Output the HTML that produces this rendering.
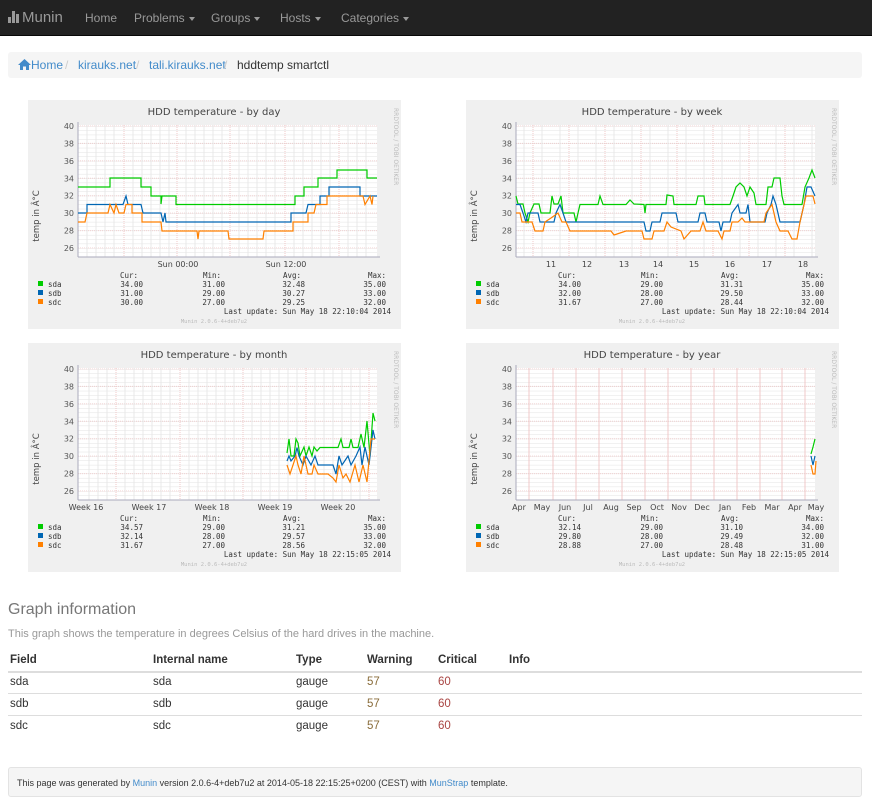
<!DOCTYPE html>
<html><head><meta charset="utf-8"><style>
*{margin:0;padding:0;box-sizing:border-box}
body{width:872px;height:809px;background:#fff;font-family:"Liberation Sans",Arial,sans-serif;font-size:12px;color:#333;position:relative;overflow:hidden}
.nav{position:absolute;left:0;top:0;width:872px;height:36px;background:#222;border-bottom:1px solid #080808}
.nav span{position:absolute;top:11px;color:#999;font-size:12px}
.brand{position:absolute;left:8px;top:9px;color:#999;font-size:15px}
.caret{display:inline-block;width:0;height:0;border-left:3px solid transparent;border-right:3px solid transparent;border-top:4px solid #999;vertical-align:middle;margin-left:4px}
.bc{position:absolute;left:8px;top:52px;width:854px;height:26px;background:#f5f5f5;border-radius:3px}
.bc span{position:absolute;top:6px;font-size:12px}
a,.lk{color:#428bca}
.sep{color:#ccc}
.g{position:absolute;width:373px;height:229px}
h3{position:absolute;left:8px;top:601px;font-size:16px;font-weight:normal;color:#777}
.desc{position:absolute;left:8px;top:628px;color:#999;font-size:11px}
.t{position:absolute;font-size:11.5px;color:#333}
.th{font-weight:bold}
.line{position:absolute;left:8px;width:854px;height:1px;background:#ddd}
.foot{position:absolute;left:8px;top:767px;width:854px;height:30px;background:#f5f5f5;border:1px solid #e3e3e3;border-radius:3px;font-size:9px;padding:10px 0 0 8px;color:#333}
</style></head><body>
<svg width="0" height="0" style="position:absolute"><defs>
<pattern id="hm" x="0" y="26" width="10" height="4.357" patternUnits="userSpaceOnUse"><line x1="0" y1="0" x2="10" y2="0" stroke="#e2e2e2" stroke-width="1"/></pattern>
</defs></svg>

<div class="nav">
<div class="brand"><svg width="14" height="12" style="vertical-align:-1px"><rect x="0" y="6" width="3" height="6" fill="#999"/><rect x="4" y="0" width="3" height="12" fill="#999"/><rect x="8" y="3" width="3" height="9" fill="#999"/></svg>Munin</div>
<span style="left:85px">Home</span>
<span style="left:134px">Problems<i class="caret"></i></span>
<span style="left:211px">Groups<i class="caret"></i></span>
<span style="left:280px">Hosts<i class="caret"></i></span>
<span style="left:341px">Categories<i class="caret"></i></span>
</div>

<div class="bc">
<span style="left:10px" class="lk"><svg width="13" height="11" style="vertical-align:-1px"><path d="M6.5 0 L13 6 L11 6 L11 11 L8 11 L8 7.5 L5 7.5 L5 11 L2 11 L2 6 L0 6 Z" fill="#428bca"/></svg>Home</span>
<span style="left:57px" class="sep">/</span>
<span style="left:70px" class="lk">kirauks.net</span>
<span style="left:128px" class="sep">/</span>
<span style="left:141px" class="lk">tali.kirauks.net</span>
<span style="left:216px" class="sep">/</span>
<span style="left:229px">hddtemp smartctl</span>
</div>

<!-- GRAPH TEMPLATE pieces repeated -->
<svg class="g" style="left:28px;top:100px" viewBox="0 0 373 229" font-family="DejaVu Sans,sans-serif">
<rect width="373" height="229" fill="#f0f0f0"/>
<rect x="50" y="25" width="299" height="132" fill="#fff"/>
<rect x="50" y="25" width="299" height="132" fill="url(#hm)"/>
<g stroke="#f0d0d0" stroke-width="1" stroke-dasharray="1,1"><line x1="50" y1="26" x2="349" y2="26"/><line x1="50" y1="43.4" x2="349" y2="43.4"/><line x1="50" y1="60.9" x2="349" y2="60.9"/><line x1="50" y1="78.3" x2="349" y2="78.3"/><line x1="50" y1="95.7" x2="349" y2="95.7"/><line x1="50" y1="113.1" x2="349" y2="113.1"/><line x1="50" y1="130.6" x2="349" y2="130.6"/><line x1="50" y1="148" x2="349" y2="148"/></g>
<g stroke="#e8e8e8"><line x1="59" y1="25" x2="59" y2="157"/><line x1="68" y1="25" x2="68" y2="157"/><line x1="77" y1="25" x2="77" y2="157"/><line x1="86" y1="25" x2="86" y2="157"/><line x1="105" y1="25" x2="105" y2="157"/><line x1="114" y1="25" x2="114" y2="157"/><line x1="123" y1="25" x2="123" y2="157"/><line x1="132" y1="25" x2="132" y2="157"/><line x1="141" y1="25" x2="141" y2="157"/><line x1="158" y1="25" x2="158" y2="157"/><line x1="167" y1="25" x2="167" y2="157"/><line x1="176" y1="25" x2="176" y2="157"/><line x1="185" y1="25" x2="185" y2="157"/><line x1="194" y1="25" x2="194" y2="157"/><line x1="211" y1="25" x2="211" y2="157"/><line x1="220" y1="25" x2="220" y2="157"/><line x1="229" y1="25" x2="229" y2="157"/><line x1="238" y1="25" x2="238" y2="157"/><line x1="247" y1="25" x2="247" y2="157"/><line x1="266" y1="25" x2="266" y2="157"/><line x1="275" y1="25" x2="275" y2="157"/><line x1="284" y1="25" x2="284" y2="157"/><line x1="293" y1="25" x2="293" y2="157"/><line x1="302" y1="25" x2="302" y2="157"/><line x1="320" y1="25" x2="320" y2="157"/><line x1="329" y1="25" x2="329" y2="157"/><line x1="338" y1="25" x2="338" y2="157"/></g>
<g stroke="#f0c8c8" stroke-dasharray="1,1"><line x1="96" y1="25" x2="96" y2="157"/><line x1="149" y1="25" x2="149" y2="157"/><line x1="202" y1="25" x2="202" y2="157"/><line x1="257" y1="25" x2="257" y2="157"/><line x1="311" y1="25" x2="311" y2="157"/></g>
<g stroke="#aab" stroke-width="1"><line x1="50" y1="157" x2="352" y2="157"/><line x1="50" y1="22" x2="50" y2="157"/></g>
<g font-size="8" fill="#555" text-anchor="end"><text x="46" y="29">40</text><text x="46" y="46.4">38</text><text x="46" y="63.9">36</text><text x="46" y="81.3">34</text><text x="46" y="98.7">32</text><text x="46" y="116.1">30</text><text x="46" y="133.6">28</text><text x="46" y="151">26</text></g>
<text x="186" y="15" font-size="10" fill="#444" text-anchor="middle">HDD temperature - by day</text>
<text transform="translate(11,116) rotate(-90)" font-size="8.5" fill="#444" text-anchor="middle">temp in Â°C</text>
<text transform="translate(366,8) rotate(90)" font-size="6" fill="#bbb">RRDTOOL / TOBI OETIKER</text>
<g font-size="8" fill="#444" text-anchor="middle"><text x="150" y="167">Sun 00:00</text><text x="258" y="167">Sun 12:00</text></g>
<g fill="none" stroke-width="1.2">
<polyline stroke="#00cc00" points="50,87 82,87 82,78 113,78 113,87 123,87 123,96 133,96 133,104 134,96 148,96 148,104.5 267,104.5 267,96 276,96 276,87 290,87 290,78 309,78 309,70 339,70 339,78 349,78"/>
<polyline stroke="#0066b3" points="50,113 59,113 59,104.5 95,104.5 98,96 100,104.5 113,104.5 115,113 133,113 135,122 137,113 138,122 263,122 263,113 278,113 280,104.5 292,104.5 292,96 301,96 301,87 332,87 332,96 349,96"/>
<polyline stroke="#ff8000" points="50,122 57,122 59,113 80,113 82,104.5 86,113 88,104.5 91,113 96,113 98,104.5 104,104.5 104,113 114,113 114,122 133,122 134,131 169,131 170,139 171,131 200,131 201,139 235,139 236,131 265,131 265,122 280,122 280,113 286,113 288,104.5 299,104.5 299,96 335,96 337,104.5 342,96 344,104.5 345,96"/>
</g>
<g font-family="DejaVu Sans Mono,monospace" font-size="7.5" fill="#333">
<rect x="10" y="181" width="5" height="5" fill="#00cc00"/><rect x="10" y="190" width="5" height="5" fill="#0066b3"/><rect x="10" y="199" width="5" height="5" fill="#ff8000"/>
<text x="20" y="187">sda</text><text x="20" y="196">sdb</text><text x="20" y="205">sdc</text>
<text x="92" y="178">Cur:</text><text x="175" y="178">Min:</text><text x="255" y="178">Avg:</text><text x="358" y="178" text-anchor="end">Max:</text>
<g text-anchor="end"><text x="115" y="187">34.00</text><text x="197" y="187">31.00</text><text x="277" y="187">32.48</text><text x="358" y="187">35.00</text>
<text x="115" y="196">31.00</text><text x="197" y="196">29.00</text><text x="277" y="196">30.27</text><text x="358" y="196">33.00</text>
<text x="115" y="205">30.00</text><text x="197" y="205">27.00</text><text x="277" y="205">29.25</text><text x="358" y="205">32.00</text>
<text x="363" y="214">Last update:  Sun May 18 22:10:04 2014</text></g>
<text x="186" y="223" font-size="5.5" fill="#bbb" text-anchor="middle">Munin 2.0.6-4+deb7u2</text></g>
</svg>

<svg class="g" style="left:466px;top:100px" viewBox="0 0 373 229" font-family="DejaVu Sans,sans-serif">
<rect width="373" height="229" fill="#f0f0f0"/>
<rect x="50" y="25" width="299" height="132" fill="#fff"/>
<rect x="50" y="25" width="299" height="132" fill="url(#hm)"/>
<g stroke="#f0d0d0" stroke-dasharray="1,1"><line x1="50" y1="26" x2="349" y2="26"/><line x1="50" y1="43.4" x2="349" y2="43.4"/><line x1="50" y1="60.9" x2="349" y2="60.9"/><line x1="50" y1="78.3" x2="349" y2="78.3"/><line x1="50" y1="95.7" x2="349" y2="95.7"/><line x1="50" y1="113.1" x2="349" y2="113.1"/><line x1="50" y1="130.6" x2="349" y2="130.6"/><line x1="50" y1="148" x2="349" y2="148"/></g>
<g stroke="#e8e8e8"><line x1="58" y1="25" x2="58" y2="157"/><line x1="76" y1="25" x2="76" y2="157"/><line x1="94" y1="25" x2="94" y2="157"/><line x1="112" y1="25" x2="112" y2="157"/><line x1="130" y1="25" x2="130" y2="157"/><line x1="148" y1="25" x2="148" y2="157"/><line x1="166" y1="25" x2="166" y2="157"/><line x1="184" y1="25" x2="184" y2="157"/><line x1="202" y1="25" x2="202" y2="157"/><line x1="220" y1="25" x2="220" y2="157"/><line x1="238" y1="25" x2="238" y2="157"/><line x1="256" y1="25" x2="256" y2="157"/><line x1="274" y1="25" x2="274" y2="157"/><line x1="292" y1="25" x2="292" y2="157"/><line x1="310" y1="25" x2="310" y2="157"/><line x1="328" y1="25" x2="328" y2="157"/><line x1="346" y1="25" x2="346" y2="157"/></g>
<g stroke="#f0c8c8" stroke-dasharray="1,1"><line x1="67" y1="25" x2="67" y2="157"/><line x1="103" y1="25" x2="103" y2="157"/><line x1="139" y1="25" x2="139" y2="157"/><line x1="175" y1="25" x2="175" y2="157"/><line x1="211" y1="25" x2="211" y2="157"/><line x1="247" y1="25" x2="247" y2="157"/><line x1="283" y1="25" x2="283" y2="157"/><line x1="319" y1="25" x2="319" y2="157"/></g>
<g stroke="#aab"><line x1="50" y1="157" x2="352" y2="157"/><line x1="50" y1="22" x2="50" y2="157"/></g>
<g font-size="8" fill="#555" text-anchor="end"><text x="46" y="29">40</text><text x="46" y="46.4">38</text><text x="46" y="63.9">36</text><text x="46" y="81.3">34</text><text x="46" y="98.7">32</text><text x="46" y="116.1">30</text><text x="46" y="133.6">28</text><text x="46" y="151">26</text></g>
<text x="186" y="15" font-size="10" fill="#444" text-anchor="middle">HDD temperature - by week</text>
<text transform="translate(11,116) rotate(-90)" font-size="8.5" fill="#444" text-anchor="middle">temp in Â°C</text>
<text transform="translate(366,8) rotate(90)" font-size="6" fill="#bbb">RRDTOOL / TOBI OETIKER</text>
<g font-size="8" fill="#444" text-anchor="middle"><text x="85" y="167">11</text><text x="121" y="167">12</text><text x="158" y="167">13</text><text x="192" y="167">14</text><text x="228" y="167">15</text><text x="264" y="167">16</text><text x="301" y="167">17</text><text x="337" y="167">18</text></g>
<g fill="none" stroke-width="1.2">
<polyline stroke="#00cc00" points="50,96 52,104 57,104 59,113 62,122 64,113 68,104 73,104 75,113 84,113 86,96 88,104 92,104 95,96 97,113 108,113 110,122 112,113 114,104.5 132,104.5 134,96 137,104.5 160,104.5 164,100 168,104 178,104.5 179,113 180,104.5 200,104.5 201,95 207,96 208,104.5 230,104.5 232,96 238,96 239,104.5 264,104.5 267,96 270,87 274,83 278,87 281,96 284,87 288,93 290,104.5 300,104.5 302,87 306,87 308,78 314,78 316,96 318,104.5 336,104.5 339,87 343,78 346,70 349,78"/>
<polyline stroke="#0066b3" points="50,104.5 54,104.5 57,113 60,122 62,113 72,113 74,122 88,122 90,113 94,104.5 97,113 100,122 178,122 180,131 184,131 186,122 194,122 196,113 210,113 212,122 232,122 234,113 239,113 241,122 253,122 255,131 257,122 264,122 266,113 272,104.5 274,113 280,113 282,104.5 284,122 299,122 301,113 305,104.5 307,96 310,104.5 314,122 334,122 338,104.5 341,87 345,87 349,96"/>
<polyline stroke="#ff8000" points="50,113 54,113 56,122 66,122 69,131 77,131 79,122 85,118 92,113 96,122 100,122 104,131 145,131 148,135 160,131 176,131 178,139 186,139 188,131 198,131 201,122 205,127 215,131 218,139 225,131 234,131 237,122 240,131 252,131 256,139 258,131 264,131 266,122 272,122 276,118 279,122 298,122 300,113 306,104.5 310,122 314,131 322,131 326,139 331,139 334,122 340,96 347,96 349,104"/>
</g>
<g font-family="DejaVu Sans Mono,monospace" font-size="7.5" fill="#333">
<rect x="10" y="181" width="5" height="5" fill="#00cc00"/><rect x="10" y="190" width="5" height="5" fill="#0066b3"/><rect x="10" y="199" width="5" height="5" fill="#ff8000"/>
<text x="20" y="187">sda</text><text x="20" y="196">sdb</text><text x="20" y="205">sdc</text>
<text x="92" y="178">Cur:</text><text x="175" y="178">Min:</text><text x="255" y="178">Avg:</text><text x="358" y="178" text-anchor="end">Max:</text>
<g text-anchor="end"><text x="115" y="187">34.00</text><text x="197" y="187">29.00</text><text x="277" y="187">31.31</text><text x="358" y="187">35.00</text>
<text x="115" y="196">32.00</text><text x="197" y="196">28.00</text><text x="277" y="196">29.50</text><text x="358" y="196">33.00</text>
<text x="115" y="205">31.67</text><text x="197" y="205">27.00</text><text x="277" y="205">28.44</text><text x="358" y="205">32.00</text>
<text x="363" y="214">Last update:  Sun May 18 22:10:04 2014</text></g>
<text x="186" y="223" font-size="5.5" fill="#bbb" text-anchor="middle">Munin 2.0.6-4+deb7u2</text></g>
</svg>

<svg class="g" style="left:28px;top:343px" viewBox="0 0 373 229" font-family="DejaVu Sans,sans-serif">
<rect width="373" height="229" fill="#f0f0f0"/>
<rect x="50" y="25" width="299" height="132" fill="#fff"/>
<rect x="50" y="25" width="299" height="132" fill="url(#hm)"/>
<g stroke="#f0d0d0" stroke-dasharray="1,1"><line x1="50" y1="26" x2="349" y2="26"/><line x1="50" y1="43.4" x2="349" y2="43.4"/><line x1="50" y1="60.9" x2="349" y2="60.9"/><line x1="50" y1="78.3" x2="349" y2="78.3"/><line x1="50" y1="95.7" x2="349" y2="95.7"/><line x1="50" y1="113.1" x2="349" y2="113.1"/><line x1="50" y1="130.6" x2="349" y2="130.6"/><line x1="50" y1="148" x2="349" y2="148"/></g>
<g stroke="#e8e8e8"><line x1="61" y1="25" x2="61" y2="157"/><line x1="70" y1="25" x2="70" y2="157"/><line x1="79" y1="25" x2="79" y2="157"/><line x1="97" y1="25" x2="97" y2="157"/><line x1="106" y1="25" x2="106" y2="157"/><line x1="115" y1="25" x2="115" y2="157"/><line x1="124" y1="25" x2="124" y2="157"/><line x1="133" y1="25" x2="133" y2="157"/><line x1="142" y1="25" x2="142" y2="157"/><line x1="161" y1="25" x2="161" y2="157"/><line x1="170" y1="25" x2="170" y2="157"/><line x1="179" y1="25" x2="179" y2="157"/><line x1="188" y1="25" x2="188" y2="157"/><line x1="197" y1="25" x2="197" y2="157"/><line x1="206" y1="25" x2="206" y2="157"/><line x1="224" y1="25" x2="224" y2="157"/><line x1="233" y1="25" x2="233" y2="157"/><line x1="242" y1="25" x2="242" y2="157"/><line x1="251" y1="25" x2="251" y2="157"/><line x1="260" y1="25" x2="260" y2="157"/><line x1="269" y1="25" x2="269" y2="157"/><line x1="287" y1="25" x2="287" y2="157"/><line x1="296" y1="25" x2="296" y2="157"/><line x1="305" y1="25" x2="305" y2="157"/><line x1="314" y1="25" x2="314" y2="157"/><line x1="323" y1="25" x2="323" y2="157"/><line x1="332" y1="25" x2="332" y2="157"/></g>
<g stroke="#f0c8c8" stroke-dasharray="1,1"><line x1="88" y1="25" x2="88" y2="157"/><line x1="152" y1="25" x2="152" y2="157"/><line x1="215" y1="25" x2="215" y2="157"/><line x1="278" y1="25" x2="278" y2="157"/><line x1="341" y1="25" x2="341" y2="157"/></g>
<g stroke="#aab"><line x1="50" y1="157" x2="352" y2="157"/><line x1="50" y1="22" x2="50" y2="157"/></g>
<g font-size="8" fill="#555" text-anchor="end"><text x="46" y="29">40</text><text x="46" y="46.4">38</text><text x="46" y="63.9">36</text><text x="46" y="81.3">34</text><text x="46" y="98.7">32</text><text x="46" y="116.1">30</text><text x="46" y="133.6">28</text><text x="46" y="151">26</text></g>
<text x="186" y="15" font-size="10" fill="#444" text-anchor="middle">HDD temperature - by month</text>
<text transform="translate(11,116) rotate(-90)" font-size="8.5" fill="#444" text-anchor="middle">temp in Â°C</text>
<text transform="translate(366,8) rotate(90)" font-size="6" fill="#bbb">RRDTOOL / TOBI OETIKER</text>
<g font-size="8" fill="#444" text-anchor="middle"><text x="58" y="167">Week 16</text><text x="121" y="167">Week 17</text><text x="184" y="167">Week 18</text><text x="247" y="167">Week 19</text><text x="310" y="167">Week 20</text></g>
<g fill="none" stroke-width="1.2">
<polyline stroke="#00cc00" points="259,110 261,96 263,113 266,113 268,96 270,100 272,113 276,104 278,113 281,104 284,113 286,104 289,108 292,104.5 310,104.5 313,96 315,104.5 321,104.5 323,96 325,104.5 330,104.5 333,91 336,104.5 339,78 342,113 345,70 347,78"/>
<polyline stroke="#0066b3" points="259,118 261,113 263,118 267,113 269,104.5 271,113 275,122 278,113 283,122 287,113 290,122 305,122 308,131 311,113 314,122 320,113 323,122 328,113 332,104 334,122 337,104 341,122 345,87 347,96"/>
<polyline stroke="#ff8000" points="259,122 262,131 265,122 268,113 270,122 273,131 276,113 280,131 284,131 286,122 290,131 300,131 305,135 308,139 311,122 315,135 318,131 322,139 327,122 331,139 335,122 339,139 343,96 347,96"/>
</g>
<g font-family="DejaVu Sans Mono,monospace" font-size="7.5" fill="#333">
<rect x="10" y="181" width="5" height="5" fill="#00cc00"/><rect x="10" y="190" width="5" height="5" fill="#0066b3"/><rect x="10" y="199" width="5" height="5" fill="#ff8000"/>
<text x="20" y="187">sda</text><text x="20" y="196">sdb</text><text x="20" y="205">sdc</text>
<text x="92" y="178">Cur:</text><text x="175" y="178">Min:</text><text x="255" y="178">Avg:</text><text x="358" y="178" text-anchor="end">Max:</text>
<g text-anchor="end"><text x="115" y="187">34.57</text><text x="197" y="187">29.00</text><text x="277" y="187">31.21</text><text x="358" y="187">35.00</text>
<text x="115" y="196">32.14</text><text x="197" y="196">28.00</text><text x="277" y="196">29.57</text><text x="358" y="196">33.00</text>
<text x="115" y="205">31.67</text><text x="197" y="205">27.00</text><text x="277" y="205">28.56</text><text x="358" y="205">32.00</text>
<text x="363" y="214">Last update:  Sun May 18 22:15:05 2014</text></g>
<text x="186" y="223" font-size="5.5" fill="#bbb" text-anchor="middle">Munin 2.0.6-4+deb7u2</text></g>
</svg>

<svg class="g" style="left:466px;top:343px" viewBox="0 0 373 229" font-family="DejaVu Sans,sans-serif">
<rect width="373" height="229" fill="#f0f0f0"/>
<rect x="50" y="25" width="299" height="132" fill="#fff"/>
<rect x="50" y="25" width="299" height="132" fill="url(#hm)"/>
<g stroke="#f0d0d0" stroke-dasharray="1,1"><line x1="50" y1="26" x2="349" y2="26"/><line x1="50" y1="43.4" x2="349" y2="43.4"/><line x1="50" y1="60.9" x2="349" y2="60.9"/><line x1="50" y1="78.3" x2="349" y2="78.3"/><line x1="50" y1="95.7" x2="349" y2="95.7"/><line x1="50" y1="113.1" x2="349" y2="113.1"/><line x1="50" y1="130.6" x2="349" y2="130.6"/><line x1="50" y1="148" x2="349" y2="148"/></g>
<g stroke="#f0c8c8"><line x1="63" y1="25" x2="63" y2="157"/><line x1="87" y1="25" x2="87" y2="157"/><line x1="110" y1="25" x2="110" y2="157"/><line x1="133" y1="25" x2="133" y2="157"/><line x1="156" y1="25" x2="156" y2="157"/><line x1="179" y1="25" x2="179" y2="157"/><line x1="202" y1="25" x2="202" y2="157"/><line x1="225" y1="25" x2="225" y2="157"/><line x1="248" y1="25" x2="248" y2="157"/><line x1="271" y1="25" x2="271" y2="157"/><line x1="294" y1="25" x2="294" y2="157"/><line x1="316" y1="25" x2="316" y2="157"/><line x1="339" y1="25" x2="339" y2="157"/></g>
<g stroke="#aab"><line x1="50" y1="157" x2="352" y2="157"/><line x1="50" y1="22" x2="50" y2="157"/></g>
<g font-size="8" fill="#555" text-anchor="end"><text x="46" y="29">40</text><text x="46" y="46.4">38</text><text x="46" y="63.9">36</text><text x="46" y="81.3">34</text><text x="46" y="98.7">32</text><text x="46" y="116.1">30</text><text x="46" y="133.6">28</text><text x="46" y="151">26</text></g>
<text x="186" y="15" font-size="10" fill="#444" text-anchor="middle">HDD temperature - by year</text>
<text transform="translate(11,116) rotate(-90)" font-size="8.5" fill="#444" text-anchor="middle">temp in Â°C</text>
<text transform="translate(366,8) rotate(90)" font-size="6" fill="#bbb">RRDTOOL / TOBI OETIKER</text>
<g font-size="8" fill="#444" text-anchor="middle"><text x="53" y="167">Apr</text><text x="76" y="167">May</text><text x="99" y="167">Jun</text><text x="122" y="167">Jul</text><text x="145" y="167">Aug</text><text x="168" y="167">Sep</text><text x="191" y="167">Oct</text><text x="213" y="167">Nov</text><text x="236" y="167">Dec</text><text x="259" y="167">Jan</text><text x="283" y="167">Feb</text><text x="306" y="167">Mar</text><text x="329" y="167">Apr</text><text x="350" y="167">May</text></g>
<g fill="none" stroke-width="1.2">
<polyline stroke="#00cc00" points="345,111 347,104 349,96"/>
<polyline stroke="#0066b3" points="345,113 347,122 349,113"/>
<polyline stroke="#ff8000" points="345,122 347,131 349,131 350,118"/>
</g>
<g font-family="DejaVu Sans Mono,monospace" font-size="7.5" fill="#333">
<rect x="10" y="181" width="5" height="5" fill="#00cc00"/><rect x="10" y="190" width="5" height="5" fill="#0066b3"/><rect x="10" y="199" width="5" height="5" fill="#ff8000"/>
<text x="20" y="187">sda</text><text x="20" y="196">sdb</text><text x="20" y="205">sdc</text>
<text x="92" y="178">Cur:</text><text x="175" y="178">Min:</text><text x="255" y="178">Avg:</text><text x="358" y="178" text-anchor="end">Max:</text>
<g text-anchor="end"><text x="115" y="187">32.14</text><text x="197" y="187">29.00</text><text x="277" y="187">31.10</text><text x="358" y="187">34.00</text>
<text x="115" y="196">29.80</text><text x="197" y="196">28.00</text><text x="277" y="196">29.49</text><text x="358" y="196">32.00</text>
<text x="115" y="205">28.88</text><text x="197" y="205">27.00</text><text x="277" y="205">28.48</text><text x="358" y="205">31.00</text>
<text x="363" y="214">Last update:  Sun May 18 22:15:05 2014</text></g>
<text x="186" y="223" font-size="5.5" fill="#bbb" text-anchor="middle">Munin 2.0.6-4+deb7u2</text></g>
</svg>

<h3>Graph information</h3>
<div class="desc">This graph shows the temperature in degrees Celsius of the hard drives in the machine.</div>

<div class="t th" style="left:10px;top:654px">Field</div>
<div class="t th" style="left:153px;top:654px">Internal name</div>
<div class="t th" style="left:296px;top:654px">Type</div>
<div class="t th" style="left:367px;top:654px">Warning</div>
<div class="t th" style="left:438px;top:654px">Critical</div>
<div class="t th" style="left:509px;top:654px">Info</div>
<div class="line" style="top:671px;height:2px"></div>
<div class="t" style="left:10px;top:676px">sda</div><div class="t" style="left:153px;top:676px">sda</div><div class="t" style="left:296px;top:676px">gauge</div><div class="t" style="left:367px;top:676px;color:#8a6d3b">57</div><div class="t" style="left:438px;top:676px;color:#a94442">60</div>
<div class="line" style="top:693px"></div>
<div class="t" style="left:10px;top:698px">sdb</div><div class="t" style="left:153px;top:698px">sdb</div><div class="t" style="left:296px;top:698px">gauge</div><div class="t" style="left:367px;top:698px;color:#8a6d3b">57</div><div class="t" style="left:438px;top:698px;color:#a94442">60</div>
<div class="line" style="top:715px"></div>
<div class="t" style="left:10px;top:720px">sdc</div><div class="t" style="left:153px;top:720px">sdc</div><div class="t" style="left:296px;top:720px">gauge</div><div class="t" style="left:367px;top:720px;color:#8a6d3b">57</div><div class="t" style="left:438px;top:720px;color:#a94442">60</div>

<div class="foot">This page was generated by <span class="lk">Munin</span> version 2.0.6-4+deb7u2 at 2014-05-18 22:15:25+0200 (CEST) with <span class="lk">MunStrap</span> template.</div>
</body></html>
